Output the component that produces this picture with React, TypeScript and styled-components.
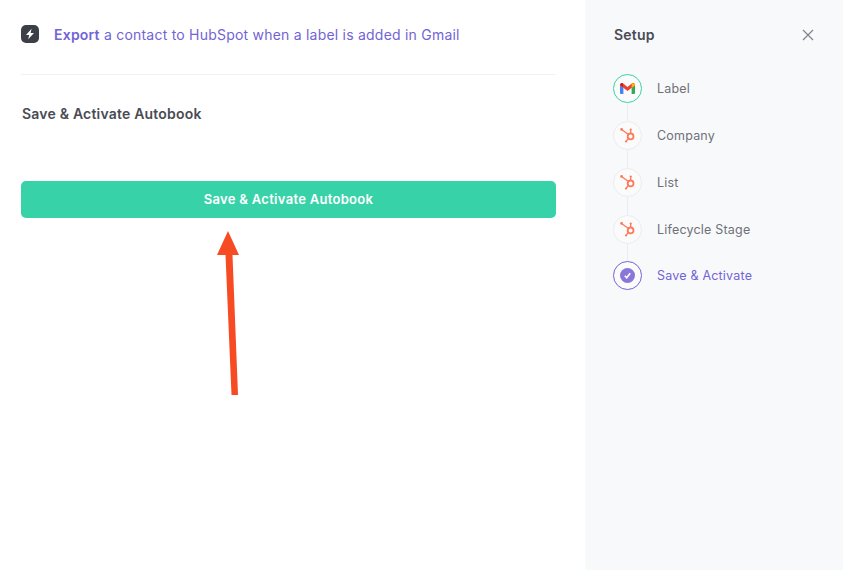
import styled, { createGlobalStyle } from "styled-components";

const GlobalStyle = createGlobalStyle`
  html, body {
    margin: 0;
    padding: 0;
    background: #fff;
    font-family: Inter, "Liberation Sans", sans-serif;
    -webkit-font-smoothing: antialiased;
  }
`;

const Page = styled.div`
  position: relative;
  width: 843px;
  height: 570px;
  display: flex;
  overflow: hidden;
`;

const Main = styled.main`
  width: 585px;
  box-sizing: border-box;
  padding: 0 29px 0 21px;
`;

const Trigger = styled.div`
  height: 75px;
  box-sizing: border-box;
  padding-bottom: 6px;
  display: flex;
  align-items: center;
  gap: 15px;
  border-bottom: 1px solid #f1f2f4;
  font-size: 14px;
  letter-spacing: 0.22px;
  color: #7264d6;
`;

const BoltBadge = styled.span`
  width: 18px;
  height: 18px;
  border-radius: 5px;
  background: #3d3f47;
  display: flex;
  align-items: center;
  justify-content: center;
`;

const Strong = styled.strong`
  font-weight: 600;
`;

const Heading = styled.h2`
  margin: 30px 0 0 1px;
  font-size: 14px;
  line-height: 17px;
  font-weight: 600;
  letter-spacing: 0.2px;
  color: #4a4b53;
`;

const SaveButton = styled.button`
  display: block;
  width: 100%;
  height: 37px;
  margin-top: 59px;
  padding: 0 0 2px;
  border: 0;
  border-radius: 5px;
  background: #38d2a9;
  color: #fff;
  font-family: inherit;
  font-size: 13px;
  font-weight: 600;
  letter-spacing: 0.3px;
`;

const Sidebar = styled.aside`
  flex: 1;
  box-sizing: border-box;
  padding: 26px 28px 0;
  background: #f8f9fb;
`;

const SidebarHead = styled.div`
  display: flex;
  align-items: center;
  justify-content: space-between;
  height: 17px;
  padding-left: 1px;
`;

const SidebarTitle = styled.h3`
  margin: 0;
  font-size: 14px;
  font-weight: 600;
  letter-spacing: 0.2px;
  color: #4a4b53;
`;

const CloseButton = styled.button`
  display: flex;
  padding: 0 1px 0 0;
  border: 0;
  background: none;
  color: #84868e;
`;

const Steps = styled.ol`
  list-style: none;
  margin: 31px 0 0;
  padding: 0;
  display: flex;
  flex-direction: column;
  gap: 17.85px;
`;

const Step = styled.li`
  position: relative;
  display: flex;
  align-items: center;
  gap: 15px;

  &:not(:last-child)::after {
    content: "";
    position: absolute;
    left: 14px;
    top: 29px;
    width: 1px;
    height: 18px;
    background: #ebecef;
  }
`;

const StepCircle = styled.span<{ $ring: string }>`
  width: 29px;
  height: 29px;
  box-sizing: border-box;
  flex: none;
  border-radius: 50%;
  border: 1px solid ${(p) => p.$ring};
  background: #fbfbfc;
  display: flex;
  align-items: center;
  justify-content: center;
`;

const StepLabel = styled.span<{ $active?: boolean }>`
  font-size: 12.5px;
  letter-spacing: 0.2px;
  color: ${(p) => (p.$active ? "#7264d6" : "#6f7178")};
`;

const ArrowLayer = styled.svg`
  position: absolute;
  left: 0;
  top: 0;
  pointer-events: none;
`;

const Bolt = () => (
  <svg width="12" height="12" viewBox="0 0 12 12">
    <path d="M7.6.8 2 7h3.2l-1 4.2L10 5H6.6z" fill="#fff" />
  </svg>
);

const Gmail = () => (
  <svg width="15" height="11" viewBox="0 0 15 11">
    <path d="M0 2.2V10a1 1 0 0 0 1 1h2.4V4.8z" fill="#4285f4" />
    <path d="M15 2.2V10a1 1 0 0 1-1 1h-2.4V4.8z" fill="#34a853" />
    <path d="M0 2.2C0 .4 1.8-.5 3.2.6l4.3 3.3L11.8.6C13.2-.5 15 .4 15 2.2L7.5 8 0 2.2z" fill="#ea4335" />
    <path d="M11.6.8C13-.5 15 .3 15 2.2l-3.4 2.6z" fill="#fbbc04" />
    <path d="M0 2.2C0 .6 1.6-.4 3 .5v4.1z" fill="#c5221f" />
  </svg>
);

const HubSpot = () => (
  <svg width="16" height="16" viewBox="0 0 16 16" fill="none" stroke="#ff7a59">
    <circle cx="10.6" cy="9.4" r="2.9" strokeWidth="1.8" />
    <path d="M1.6 2.4 8.4 7.6M10.7 6V2.5M8.4 11.4 6 14.5" strokeWidth="1.3" />
    <circle cx="1.6" cy="2.4" r="1.4" fill="#ff7a59" stroke="none" />
    <circle cx="10.7" cy="2.5" r="1.1" fill="#ff7a59" stroke="none" />
    <circle cx="6" cy="14.5" r="1.1" fill="#ff7a59" stroke="none" />
  </svg>
);

const CheckBadge = () => (
  <svg width="15" height="15" viewBox="0 0 15 15">
    <circle cx="7.5" cy="7.5" r="7.5" fill="#8a76d8" />
    <path d="M4.8 7.8 6.7 9.7 10.2 5.3" fill="none" stroke="#fff" strokeWidth="1.6" />
  </svg>
);

const hubSpotSteps = ["Company", "List", "Lifecycle Stage"];

export default function App() {
  return (
    <Page>
      <GlobalStyle />
      <Main>
        <Trigger>
          <BoltBadge>
            <Bolt />
          </BoltBadge>
          <span>
            <Strong>Export</Strong> a contact to HubSpot when a label is added in Gmail
          </span>
        </Trigger>
        <Heading>Save &amp; Activate Autobook</Heading>
        <SaveButton>Save &amp; Activate Autobook</SaveButton>
      </Main>
      <Sidebar>
        <SidebarHead>
          <SidebarTitle>Setup</SidebarTitle>
          <CloseButton aria-label="Close">
            <svg width="12" height="12" viewBox="0 0 12 12" stroke="currentColor" strokeWidth="1.3">
              <path d="M1 1l10 10M11 1 1 11" />
            </svg>
          </CloseButton>
        </SidebarHead>
        <Steps>
          <Step>
            <StepCircle $ring="#38d2a9">
              <Gmail />
            </StepCircle>
            <StepLabel>Label</StepLabel>
          </Step>
          {hubSpotSteps.map((name) => (
            <Step key={name}>
              <StepCircle $ring="#ebecef">
                <HubSpot />
              </StepCircle>
              <StepLabel>{name}</StepLabel>
            </Step>
          ))}
          <Step>
            <StepCircle $ring="#7264d6">
              <CheckBadge />
            </StepCircle>
            <StepLabel $active>Save &amp; Activate</StepLabel>
          </Step>
        </Steps>
      </Sidebar>
      <ArrowLayer width="843" height="570" viewBox="0 0 843 570">
        <path d="M228 231 239 255H232.5L238 395H231.5L225.5 255H217z" fill="#f74c23" />
      </ArrowLayer>
    </Page>
  );
}
